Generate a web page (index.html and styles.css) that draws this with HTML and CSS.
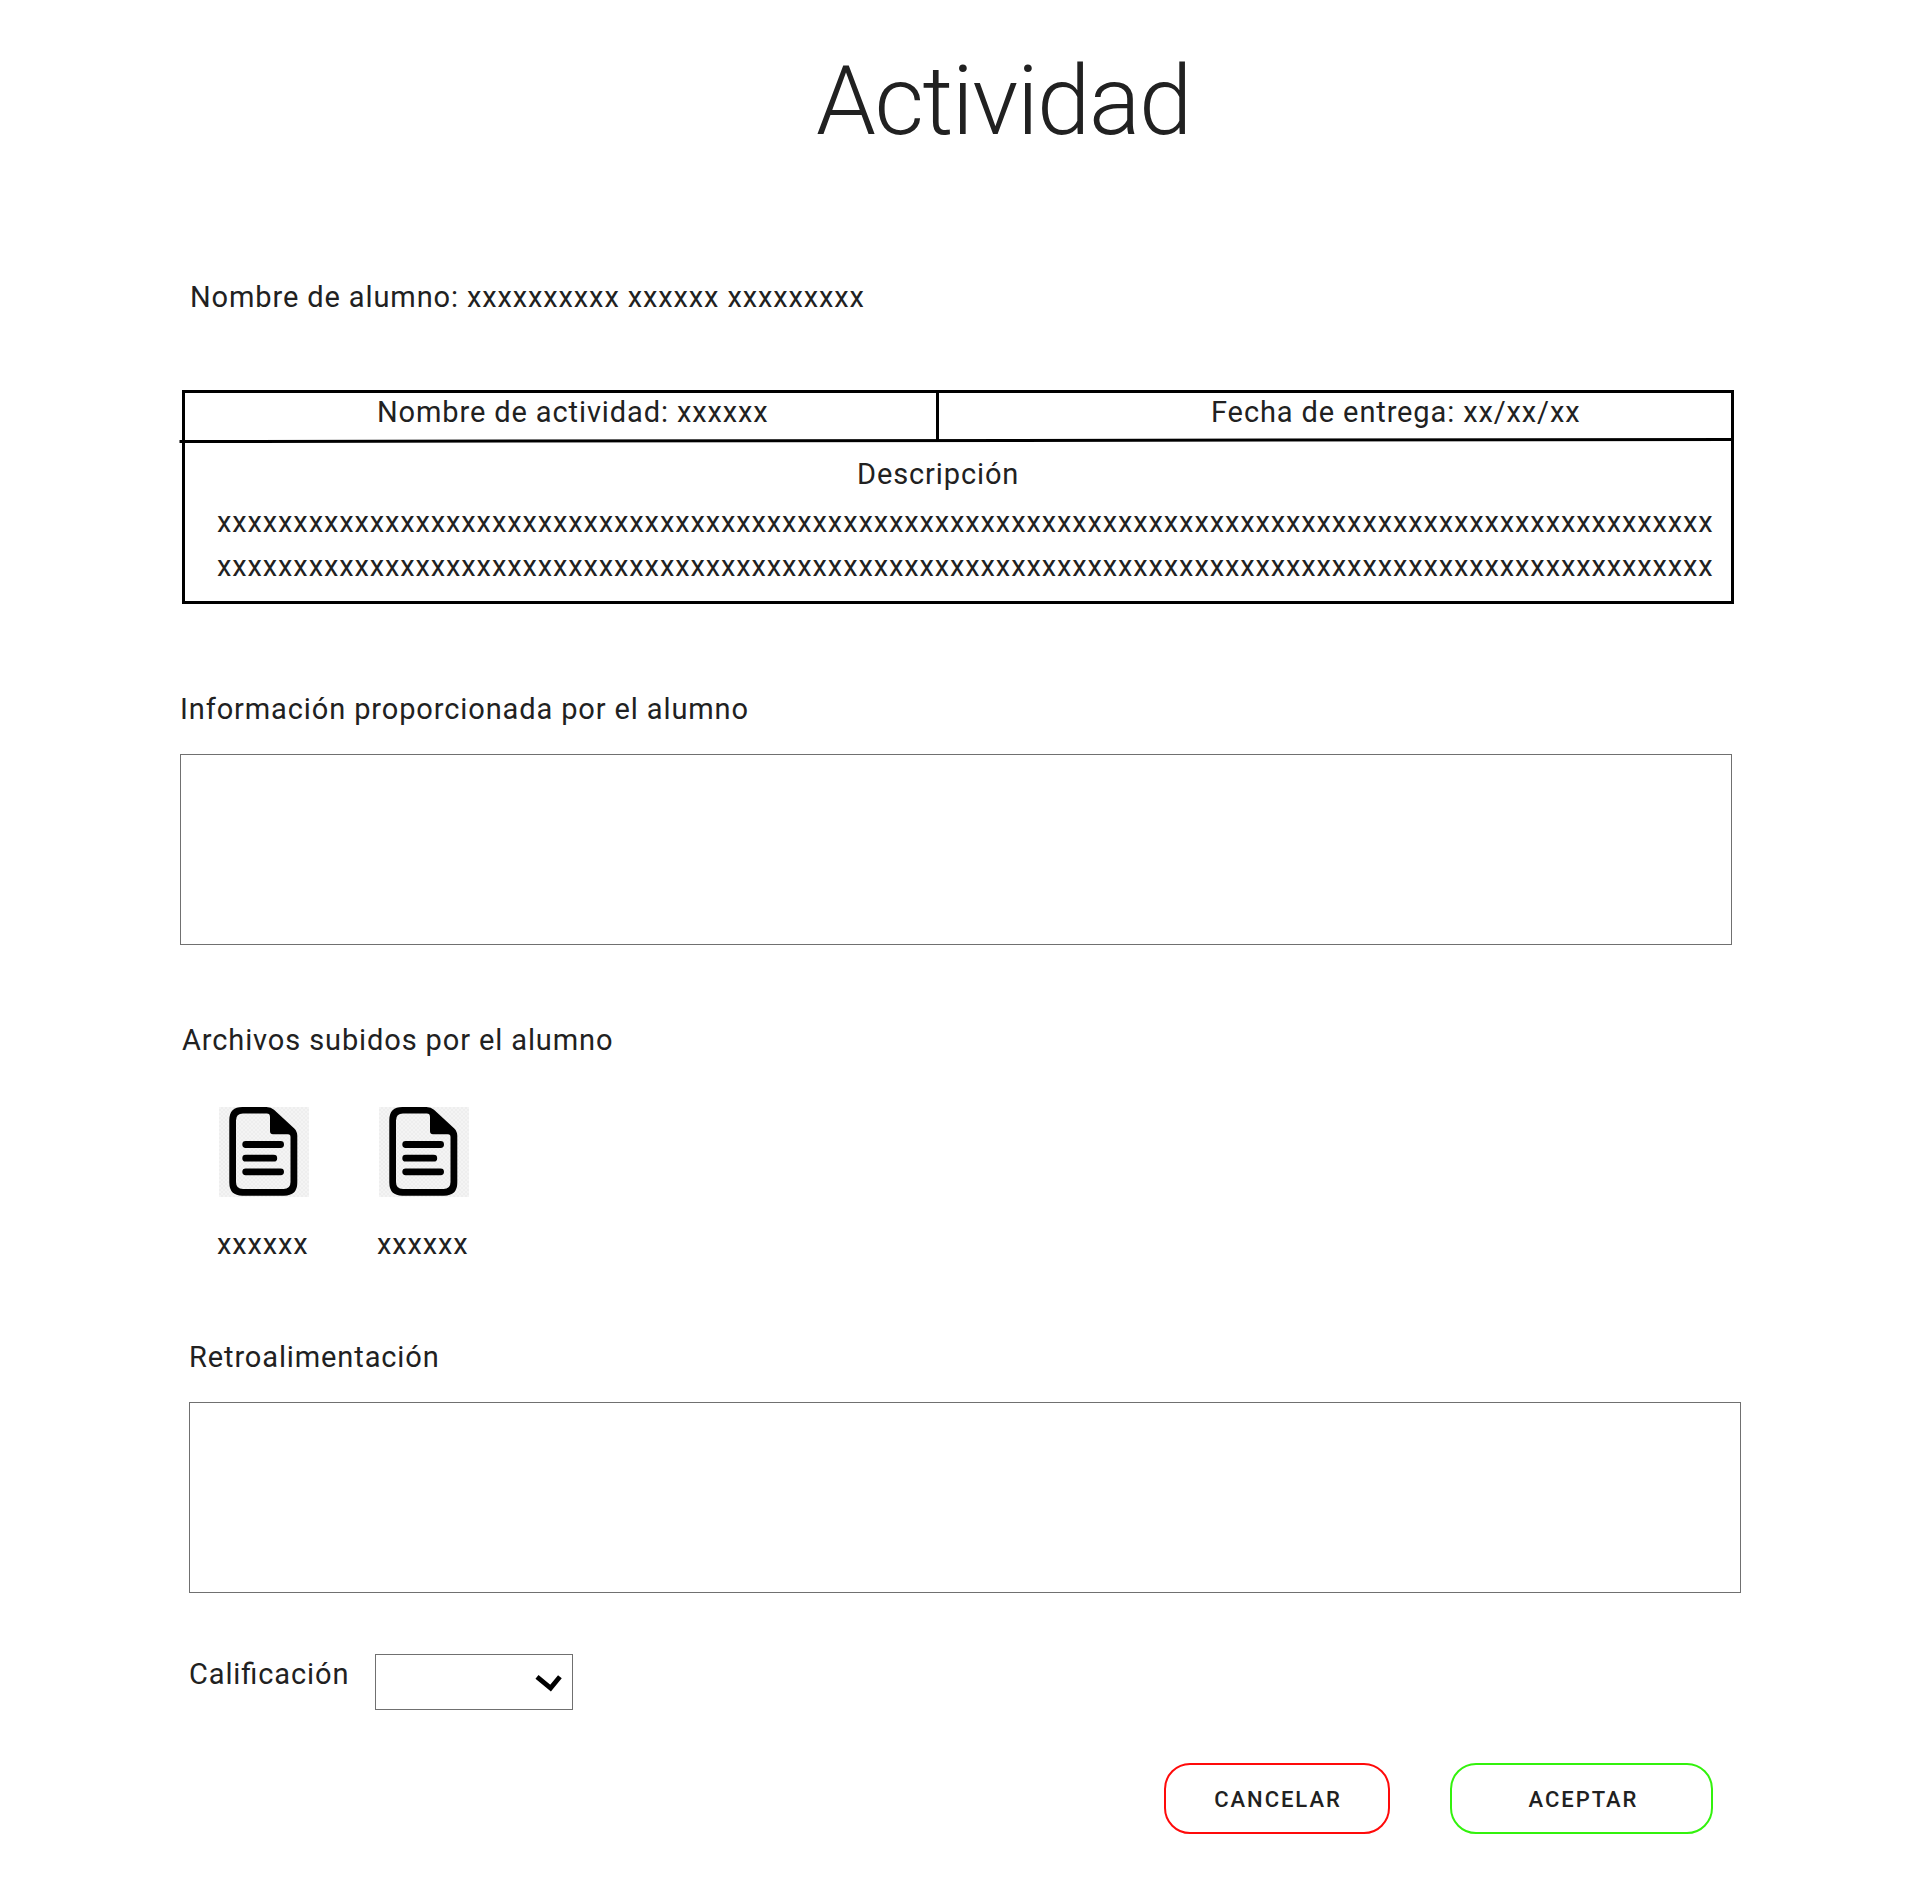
FILE: index.html
```html
<!DOCTYPE html>
<html lang="es">
<head>
<meta charset="utf-8">
<title>Actividad</title>
<link rel="stylesheet" href="styles.css">
</head>
<body>
<svg width="0" height="0" class="defs" aria-hidden="true">
  <symbol id="file" viewBox="0 0 90 90">
    <path fill-rule="evenodd" d="M23.5 0H47.5Q52 0 55 2.8L75.3 21.5Q78.3 24.5 78.3 29V75.5Q78.3 88.7 65 88.7H23.5Q10.3 88.7 10.3 75.5V13Q10.3 0 23.5 0ZM24 6.6Q17 6.6 17 13.5V75Q17 82 24 82H64.5Q71.5 82 71.5 75V30Q71.5 27.2 69 27.2H54Q51 27.2 51 24.2V10Q51 6.6 47.8 6.6Z"/>
    <path fill="none" stroke="#000" stroke-width="6.8" stroke-linecap="round" d="M26.7 37.5H61.6M26.7 51.2H54.8M26.7 64.8H61.6"/>
  </symbol>
</svg>
<main class="page">
  <h1 class="title">Actividad</h1>
  <p class="text student">Nombre de alumno: xxxxxxxxxx xxxxxx xxxxxxxxx</p>

  <section class="activity">
    <div class="activity-head">
      <p class="text activity-name">Nombre de actividad: xxxxxx</p>
      <p class="text activity-date">Fecha de entrega: xx/xx/xx</p>
    </div>
    <svg class="rule" width="1555" height="6" viewBox="0 0 1555 6"><path d="M0.5 4.5L1553 2.5" stroke="#000" stroke-width="3"/></svg>
    <h2 class="text activity-heading">Descripción</h2>
    <p class="text activity-body">xxxxxxxxxxxxxxxxxxxxxxxxxxxxxxxxxxxxxxxxxxxxxxxxxxxxxxxxxxxxxxxxxxxxxxxxxxxxxxxxxxxxxxxxxxxxxxxxxx<br>xxxxxxxxxxxxxxxxxxxxxxxxxxxxxxxxxxxxxxxxxxxxxxxxxxxxxxxxxxxxxxxxxxxxxxxxxxxxxxxxxxxxxxxxxxxxxxxxxx</p>
  </section>

  <section class="info">
    <h2 class="text">Información proporcionada por el alumno</h2>
    <div class="box"></div>
  </section>

  <section class="uploads">
    <h2 class="text">Archivos subidos por el alumno</h2>
    <div class="files">
      <div class="file"><svg class="file-icon"><use href="#file"/></svg><span class="text">xxxxxx</span></div>
      <div class="file"><svg class="file-icon"><use href="#file"/></svg><span class="text">xxxxxx</span></div>
    </div>
  </section>

  <section class="feedback">
    <h2 class="text">Retroalimentación</h2>
    <div class="box"></div>
  </section>

  <div class="grade">
    <span class="text grade-label">Calificación</span>
    <div class="select"><svg width="28" height="20" viewBox="0 0 28 20"><path d="M2 2.8L15.6 14.1L24.9 2.8" fill="none" stroke="#000" stroke-width="4.8"/></svg></div>
  </div>

  <div class="actions">
    <button class="btn btn-cancel">CANCELAR</button>
    <button class="btn btn-accept">ACEPTAR</button>
  </div>
</main>
</body>
</html>
```
FILE: styles.css
```css
* { box-sizing: border-box; }
body { margin: 0; background: #fff; color: #212121; font-family: Roboto, "Liberation Sans", sans-serif; }
.defs { position: absolute; }
.page { width: 1920px; height: 1879px; padding: 45px 0 0 180px; overflow: hidden; }
.title { margin: 0 0 0 636px; font-size: 96px; font-weight: 300; line-height: 112px; letter-spacing: -1.44px; }
.text { margin: 0; font-size: 29px; font-weight: 400; line-height: 36px; letter-spacing: 0.885px; white-space: nowrap; font-feature-settings: "liga" 1; }
.student { margin: 122px 0 0 10px; }
.activity { position: relative; width: 1552px; height: 214px; margin: 75px 0 0 2px; border: 3px solid #000; }
.activity-head { display: grid; grid-template-columns: 754px 1fr; height: 47px; }
.activity-name { padding: 1px 0 0 192px; border-right: 3px solid #000; }
.activity-date { padding: 1px 0 0 272px; }
.rule { position: absolute; left: -6px; top: 44px; }
.activity-heading { margin: 16px 0 0 672px; }
.activity-body { margin: 8px 0 0 32px; line-height: 44px; }
.info { margin-top: 87px; }
.box { width: 1552px; height: 191px; margin-top: 27px; border: 1px solid #707070; }
.uploads { margin: 77px 0 0 2px; }
.files { display: flex; gap: 70px; margin: 49px 0 0 37px; }
.file { display: flex; flex-direction: column; gap: 29px; width: 90px; }
.file .text { margin-left: -2px; }
.file-icon { display: block; width: 90px; height: 90px; background: repeating-conic-gradient(#eee 0 25%, #f4f4f4 0 50%) 0 0 / 4px 4px; }
.feedback { margin: 77px 0 0 9px; }
.grade { display: flex; margin: 61px 0 0 9px; }
.grade-label { width: 186px; padding-top: 2px; }
.select { display: flex; justify-content: flex-end; width: 198px; height: 56px; padding: 19px 9px 0 0; border: 1px solid #707070; }
.actions { display: flex; gap: 60px; margin: 53px 0 0 984px; }
.btn { height: 71px; padding: 2px 0 0 2px; border: 2px solid; border-radius: 26px; background: #fff; color: #212121; font: 500 22px/26px Roboto, sans-serif; letter-spacing: 1.96px; }
.btn-cancel { width: 226px; border-color: #ff0a0a; }
.btn-accept { width: 263px; padding-left: 4px; border-color: #33f20d; }
```
